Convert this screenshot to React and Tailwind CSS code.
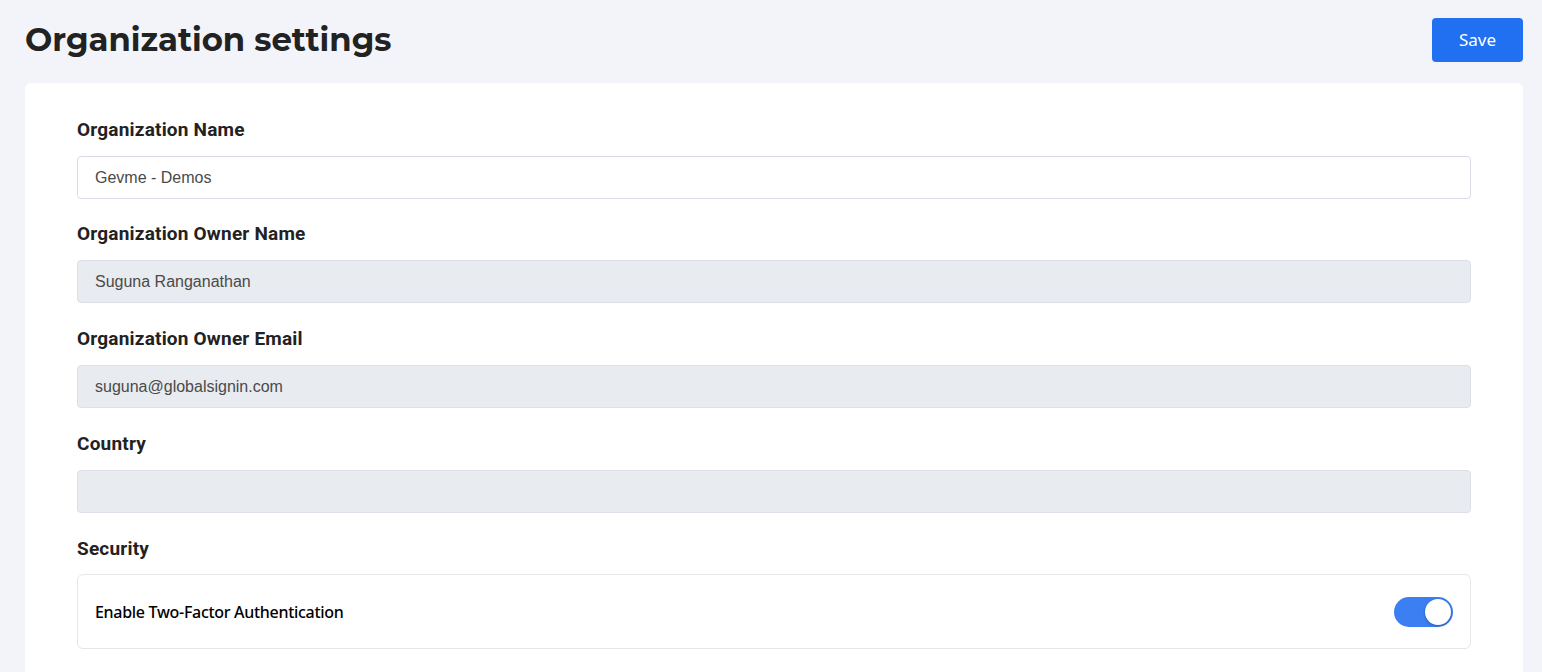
import React from "react";

function Label({ children }) {
  return (
    <div className="text-[19px] leading-[24px] font-bold tracking-[0.2px] text-[#222222] [font-family:Roboto,sans-serif]">
      {children}
    </div>
  );
}

function Field({ label, value, disabled }) {
  return (
    <div className="flex flex-col">
      <Label>{label}</Label>
      <div
        className={`mt-[14px] h-[43px] rounded-[4px] border flex items-center px-[17px] text-[16px] text-[#4a4a4a] [font-family:'Liberation_Sans',Arial,sans-serif] ${
          disabled ? "bg-[#e8ebef] border-[#dcdfe8]" : "bg-white border-[#d9dbe8]"
        }`}
      >
        {value}
      </div>
    </div>
  );
}

export default function App() {
  return (
    <div className="min-h-[672px] bg-[#f3f4f9] px-[19px] pt-[18px]">
      <div className="flex items-center justify-between pl-[6px]">
        <h1 className="text-[32.3px] leading-[44px] font-bold text-[#222222] [font-family:Montserrat,Inter,sans-serif]">
          Organization settings
        </h1>
        <button className="h-[44px] w-[91px] rounded-[4px] bg-[#2170f2] text-white text-[17px] [font-family:'Noto_Sans','Open_Sans',sans-serif] flex items-center justify-center">
          Save
        </button>
      </div>
      <div className="mt-[21px] ml-[6px] bg-white rounded-t-[6px] px-[52px] pt-[35px] pb-[30px] min-h-[589px]">
        <div className="flex flex-col gap-[24px]">
          <Field label="Organization Name" value="Gevme - Demos" />
          <div className="-mt-[1px]">
            <Field label="Organization Owner Name" value="Suguna Ranganathan" disabled />
          </div>
          <Field label="Organization Owner Email" value="suguna@globalsignin.com" disabled />
          <Field label="Country" value="" disabled />
          <div className="flex flex-col">
            <Label>Security</Label>
            <div className="mt-[13px] h-[75px] rounded-[6px] border border-[#e6e7eb] flex items-center justify-between pl-[17px] pr-[17px]">
              <span className="text-[16px] font-medium tracking-[-0.3px] text-black [font-family:'Noto_Sans','Open_Sans',sans-serif]">
                Enable Two-Factor Authentication
              </span>
              <div className="w-[59px] h-[30px] rounded-full bg-[#3b7ff2] flex items-center justify-end pr-[2px]">
                <div className="w-[26px] h-[26px] rounded-full bg-white shadow-[0_1px_3px_rgba(0,0,0,0.3)]" />
              </div>
            </div>
          </div>
        </div>
      </div>
    </div>
  );
}
